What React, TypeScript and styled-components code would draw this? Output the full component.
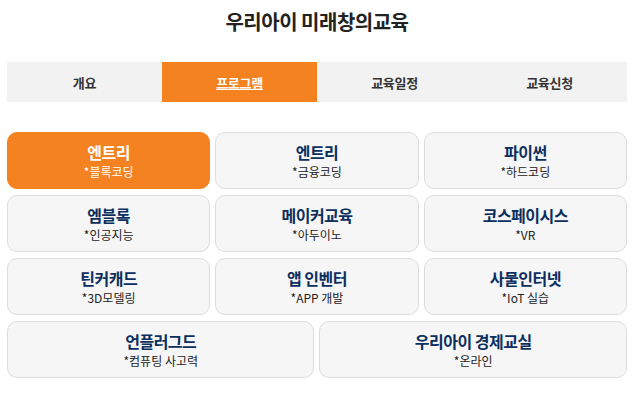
import React from 'react';
import styled, { createGlobalStyle } from 'styled-components';

const GlobalStyle = createGlobalStyle`
  body {
    margin: 0;
    background: #fff;
    font-family: "Noto Sans CJK KR", "Noto Sans", sans-serif;
  }
`;

const tabs = ['개요', '프로그램', '교육일정', '교육신청'];

const programs = [
  { name: '엔트리', desc: '*블록코딩', active: true },
  { name: '엔트리', desc: '*금융코딩' },
  { name: '파이썬', desc: '*하드코딩' },
  { name: '엠블록', desc: '*인공지능' },
  { name: '메이커교육', desc: '*아두이노' },
  { name: '코스페이시스', desc: '*VR' },
  { name: '틴커캐드', desc: '*3D모델링' },
  { name: '앱 인벤터', desc: '*APP 개발' },
  { name: '사물인터넷', desc: '*IoT 실습' },
  { name: '언플러그드', desc: '*컴퓨팅 사고력', wide: true },
  { name: '우리아이 경제교실', desc: '*온라인', wide: true },
];

const App = () => {
  return (
    <Page>
      <GlobalStyle />
      <Title>우리아이 미래창의교육</Title>
      <TabBar>
        {tabs.map((t, i) => (
          <Tab key={t} $active={i === 1}>{t}</Tab>
        ))}
      </TabBar>
      <Grid>
        {programs.map((p, i) => (
          <Card key={i} $active={p.active} $wide={p.wide}>
            <CardTitle $active={p.active}>{p.name}</CardTitle>
            <CardDesc $active={p.active}>{p.desc}</CardDesc>
          </Card>
        ))}
      </Grid>
    </Page>
  );
};

const Page = styled.div`
  padding: 10px 6px 0 7px;
`;

const Title = styled.h1`
  margin: 0 0 28px;
  text-align: center;
  font-size: 20px;
  line-height: 24px;
  font-weight: 700;
  color: #222;
  letter-spacing: -0.5px;
`;

const TabBar = styled.div`
  display: grid;
  grid-template-columns: repeat(4, 1fr);
  height: 40px;
  background: #f2f2f2;
`;

const Tab = styled.div<{ $active?: boolean }>`
  display: flex;
  align-items: center;
  justify-content: center;
  font-size: 13px;
  font-weight: 700;
  letter-spacing: -0.3px;
  color: ${(p) => (p.$active ? '#fff' : '#333')};
  background: ${(p) => (p.$active ? '#f58220' : 'transparent')};
  text-decoration: ${(p) => (p.$active ? 'underline' : 'none')};
`;

const Grid = styled.div`
  margin-top: 30px;
  display: grid;
  grid-template-columns: repeat(6, 1fr);
  grid-auto-rows: 57px;
  column-gap: 5px;
  row-gap: 6px;
`;

const Card = styled.div<{ $active?: boolean; $wide?: boolean }>`
  grid-column: span ${(p) => (p.$wide ? 3 : 2)};
  box-sizing: border-box;
  display: flex;
  flex-direction: column;
  align-items: center;
  justify-content: center;
  border-radius: 10px;
  border: 1px solid ${(p) => (p.$active ? '#f58220' : '#dddddd')};
  background: ${(p) => (p.$active ? '#f58220' : '#f6f6f6')};
`;

const CardTitle = styled.div<{ $active?: boolean }>`
  font-size: 16px;
  line-height: 22px;
  font-weight: 700;
  letter-spacing: -0.5px;
  color: ${(p) => (p.$active ? '#fff' : '#0c2f5e')};
`;

const CardDesc = styled.div<{ $active?: boolean }>`
  font-size: 12px;
  line-height: 17px;
  color: ${(p) => (p.$active ? '#fff' : '#222')};
`;

export default App;
